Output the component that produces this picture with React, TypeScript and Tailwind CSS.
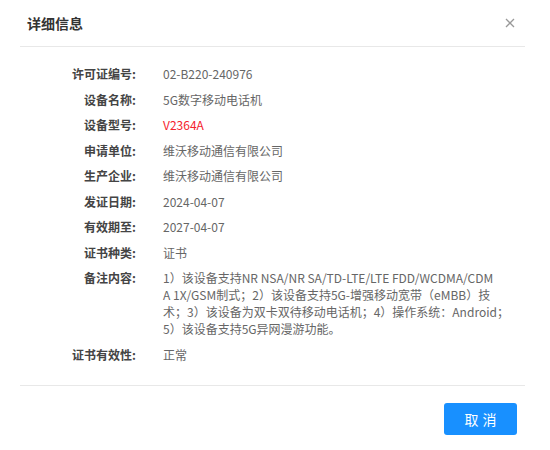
import React from 'react';

interface Row {
  label: string;
  value: React.ReactNode;
  red?: boolean;
}

const rows: Row[] = [
  { label: '许可证编号:', value: '02-B220-240976' },
  { label: '设备名称:', value: '5G数字移动电话机' },
  { label: '设备型号:', value: 'V2364A', red: true },
  { label: '申请单位:', value: '维沃移动通信有限公司' },
  { label: '生产企业:', value: '维沃移动通信有限公司' },
  { label: '发证日期:', value: '2024-04-07' },
  { label: '有效期至:', value: '2027-04-07' },
  { label: '证书种类:', value: '证书' },
  {
    label: '备注内容:',
    value: (
      <>
        <span className="block">1）该设备支持NR NSA/NR SA/TD-LTE/LTE FDD/WCDMA/CDM</span>
        <span className="block">A 1X/GSM制式；2）该设备支持5G-增强移动宽带（eMBB）技</span>
        <span className="block">术；3）该设备为双卡双待移动电话机；4）操作系统：Android；</span>
        <span className="block">5）该设备支持5G异网漫游功能。</span>
      </>
    ),
  },
  { label: '证书有效性:', value: '正常' },
];

const App: React.FC = () => {
  return (
    <div
      className="w-[550px] h-[450px] bg-white overflow-hidden"
      style={{ fontFamily: '"Noto Sans CJK SC", "Noto Sans", sans-serif' }}
    >
      <div className="flex items-center justify-between h-[47px] ml-[20px] mr-[25px] pl-[7px] border-b border-[#e8e8e8]">
        <h2 className="text-[14px] font-bold text-[#333]">详细信息</h2>
        <button className="w-[16px] h-[16px] flex items-center justify-center text-[#999] mr-[7px]">
          <svg width="10" height="10" viewBox="0 0 10 10" fill="none" stroke="currentColor" strokeWidth="1.3">
            <path d="M1 1L9 9M9 1L1 9" />
          </svg>
        </button>
      </div>

      <div className="pt-[14px] pb-[18px] ml-[20px] mr-[25px] border-b border-[#e8e8e8]">
        {rows.map((row, idx) => (
          <div key={idx} className="flex py-[4.25px] text-[12px] leading-[17px]">
            <div className="w-[116px] shrink-0 text-right font-semibold text-[#444]">{row.label}</div>
            <div className={`ml-[27px] flex-1 whitespace-nowrap ${row.red ? 'text-[#f5222d]' : 'text-[#666]'}`}>
              {row.value}
            </div>
          </div>
        ))}
      </div>

      <div className="flex justify-end mr-[33px] pt-[17px]">
        <button className="w-[73px] h-[32px] rounded-[3px] bg-[#1890ff] text-white text-[14px] tracking-[4px] pl-[4px]">
          取消
        </button>
      </div>
    </div>
  );
};

export default App;
